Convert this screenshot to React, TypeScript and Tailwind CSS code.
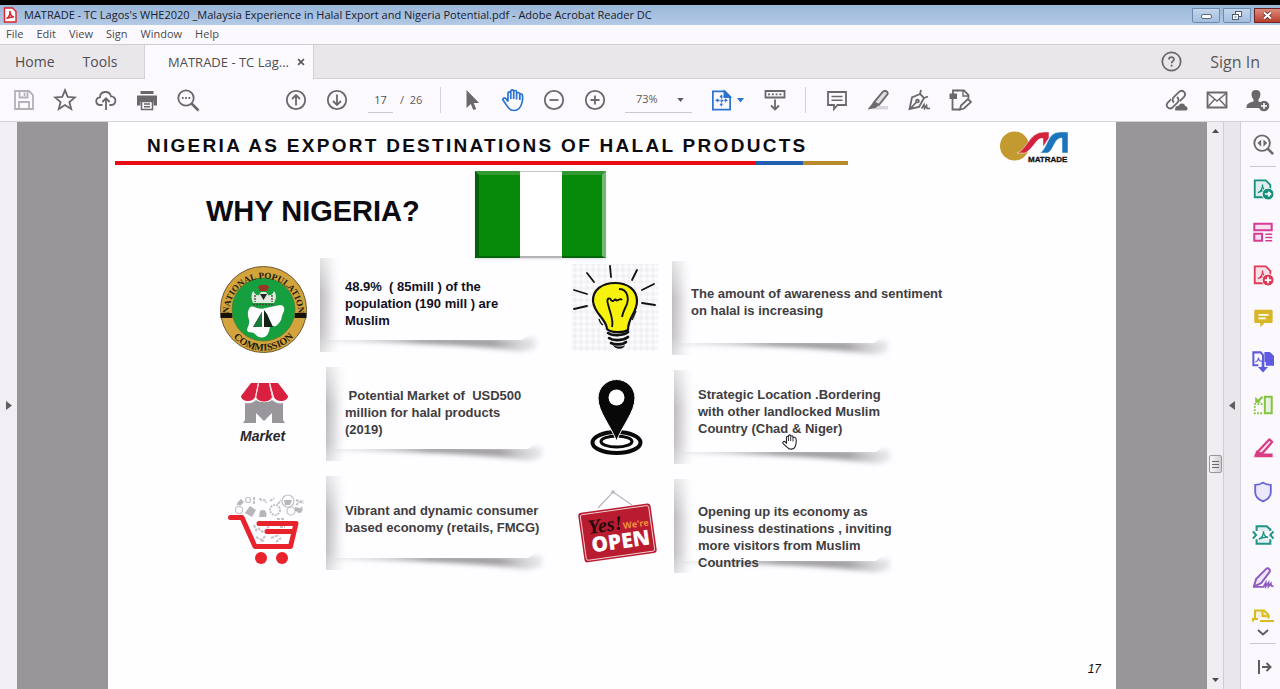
import type { ReactNode } from "react";

/* ---------- shared pieces ---------- */

function Svg({ size = 24, children, className = "" }: { size?: number; children: ReactNode; className?: string }) {
  return (
    <svg width={size} height={size} viewBox="0 0 24 24" fill="none" stroke="currentColor" strokeWidth="1.800" className={className} aria-hidden="true">
      {children}
    </svg>
  );
}

function ToolButton({ label, children, tone = "text-[#6a686b]" }: { label: string; children: ReactNode; tone?: string }) {
  return (
    <button type="button" aria-label={label} className={`flex h-10 w-[41px] shrink-0 items-center justify-center ${tone}`}>
      <Svg>{children}</Svg>
    </button>
  );
}

function Divider() {
  return <div className="h-[26px] w-px shrink-0 bg-[#d3d1d5]" />;
}

/* ---------- window chrome ---------- */

function TitleBar() {
  return (
    <div className="flex h-5 items-center bg-linear-to-b from-[#9ab6d8] to-[#b4cae6] pl-[3px]">
      <svg width="14" height="16" viewBox="0 0 14 16" aria-hidden="true">
        <path d="M1.500 1h8L13 4.500V15H1.500Z" fill="#fff" stroke="#d8262c" strokeWidth="1.400" />
        <path d="M3.500 11.500c2-.8 3.500-4 3.500-7.500 0 3.500 1.500 5.500 4 6-2.500-.3-5 .2-7.500 1.500Z" fill="none" stroke="#d8262c" strokeWidth="1.500" />
      </svg>
      <h1 className="ml-[7px] text-[11px] leading-4 text-[#16202e]">
        MATRADE - TC Lagos's WHE2020 _Malaysia Experience in Halal Export and Nigeria Potential.pdf - Adobe Acrobat Reader DC
      </h1>
      <div className="ml-auto flex gap-[3px]">
        <button type="button" aria-label="Minimize" className="flex h-[15px] w-7 items-center justify-center rounded-b-xs border border-[#6f8cb0] bg-linear-to-b from-[#c3d6ec] to-[#a3bedd]">
          <span className="mt-0.5 h-[5px] w-[11px] rounded-xs border border-[#5a6a80] bg-white" />
        </button>
        <button type="button" aria-label="Restore" className="flex h-[15px] w-7 items-center justify-center rounded-b-xs border border-[#6f8cb0] bg-linear-to-b from-[#c3d6ec] to-[#a3bedd]">
          <svg width="12" height="11" viewBox="0 0 12 11" fill="#fff" stroke="#4f5f75" aria-hidden="true">
            <rect x="4.500" y="1.500" width="6" height="5" />
            <rect x="1.500" y="4.500" width="6" height="5" />
            <path d="M3.500 7h2" />
          </svg>
        </button>
        <button type="button" aria-label="Close" className="flex h-[15px] w-[26px] items-center justify-center border border-r-0 border-[#6d2523] bg-linear-to-b from-[#dc8b7c] to-[#b93d2c]">
          <svg width="11" height="9" viewBox="0 0 11 9" aria-hidden="true">
            <path d="M2 1.500 9 7.500M9 1.500 2 7.500" stroke="#5b2320" strokeWidth="3.600" />
            <path d="M2 1.500 9 7.500M9 1.500 2 7.500" stroke="#fff" strokeWidth="2.200" />
          </svg>
        </button>
      </div>
    </div>
  );
}

function MenuBar() {
  return (
    <nav aria-label="Menu" className="flex h-[19px] items-center gap-[13px] bg-[#fbf9fd] pl-1.5 text-[11px] text-[#4c4a4e]">
      {["File", "Edit", "View", "Sign", "Window", "Help"].map((m) => (
        <button key={m} type="button">{m}</button>
      ))}
    </nav>
  );
}

function TabBar() {
  return (
    <div className="flex h-[35px] items-stretch border-t border-[#cfcdd0] bg-[#e9e7ea] text-sm text-[#4f4d50]">
      <div className="flex w-36 items-center gap-7 border-b border-[#d3d1d4] pl-[15px]">
        <button type="button">Home</button>
        <button type="button">Tools</button>
      </div>
      <div className="flex w-[170px] items-center justify-end gap-2 border-x border-[#d3d1d4] bg-[#fcfafe] pr-2 text-[13px]">
        <button type="button">MATRADE - TC Lag...</button>
        <button type="button" aria-label="Close tab">
          <svg width="8" height="8" viewBox="0 0 9 9" stroke="#5b595c" strokeWidth="1.900" aria-hidden="true">
            <path d="M1.200 1.200 7.800 7.800M7.800 1.200 1.200 7.800" />
          </svg>
        </button>
      </div>
      <div className="flex flex-1 items-center justify-end gap-7 border-b border-[#d3d1d4] pr-5">
        <button type="button" aria-label="Help" className="text-[#666467]">
          <svg width="21" height="21" viewBox="0 0 21 21" fill="none" stroke="currentColor" strokeWidth="1.700" aria-hidden="true">
            <circle cx="10.500" cy="10.500" r="9.200" />
            <path d="M8 8.400c0-3 5-3 5-.2 0 1.900-2.400 1.900-2.400 4" />
            <path d="M10.600 13.700v1.900" />
          </svg>
        </button>
        <button type="button" className="text-base font-medium text-[#59575a]">Sign In</button>
      </div>
    </div>
  );
}

function Toolbar() {
  return (
    <div role="toolbar" aria-label="Document tools" className="flex h-[43px] items-center border-b border-[#d5d3d7] bg-[#fcfafe] pl-[3px] pr-0.5">
      <ToolButton label="Save" tone="text-[#b4b2b6]">
        <path d="M3 3h14l4 4v14H3Z" /><path d="M7.500 3v6.500h8V3M12.500 4.500v3.500M7 21v-7h10v7" />
      </ToolButton>
      <ToolButton label="Favourite">
        <path d="m12 2.200 2.700 6.700 7.200.5-5.500 4.600 1.800 7L12 17.100l-6.200 3.900 1.800-7L2.100 9.400l7.200-.5Z" />
      </ToolButton>
      <ToolButton label="Upload">
        <path d="M8.500 17H6.600C1 17 .8 9.800 6 9.300 6 2.700 15.600 2.100 17 8.400c5.700-.3 5.900 8.600.4 8.600h-2" />
        <path d="M12 22V10.500M8.300 14 12 10.300 15.700 14" />
      </ToolButton>
      <ToolButton label="Print">
        <path d="M5.500 3h13v3h-13Z" fill="currentColor" stroke="none" />
        <path d="M2 7.500h20v10h-3.500v-4h-13v4H2Z" fill="currentColor" stroke="none" />
        <path d="M6.500 13.500h11v8h-11ZM9 16h6M9 18.800h6" strokeWidth="1.500" />
      </ToolButton>
      <ToolButton label="Find">
        <circle cx="10" cy="10" r="7.700" /><path d="m15.500 15.500 7 7" strokeWidth="2.600" />
        <path d="M5.900 10h1.700M9.200 10h1.700M12.500 10h1.700" strokeWidth="1.800" />
      </ToolButton>

      <div className="ml-[67px] flex items-center">
        <ToolButton label="Previous page">
          <circle cx="12" cy="12" r="9.200" /><path d="M12 17.500V7M8 11l4-4 4 4" />
        </ToolButton>
        <ToolButton label="Next page">
          <circle cx="12" cy="12" r="9.200" /><path d="M12 6.500V17M8 13l4 4 4-4" />
        </ToolButton>
        <input aria-label="Page number" defaultValue="17" className="ml-[11px] h-[25px] w-[25px] border-b border-[#cbc9cd] bg-transparent text-center text-[11px] text-[#4f4d50]" />
        <span className="ml-[7px] w-10 whitespace-pre text-[11px] text-[#5c5a5d]">/  26</span>
      </div>
      <Divider />

      <div className="ml-2.5 flex items-center">
        <ToolButton label="Select">
          <path d="M6.500 2v18l4.300-3.900 2.500 6 2.900-1.200-2.500-5.900h5.500Z" fill="currentColor" stroke="none" />
        </ToolButton>
        <ToolButton label="Pan" tone="text-[#2a74cf]">
          <path d="M7 13.500V5.300c0-2 2.800-2 2.800 0V11M9.800 10V3.400c0-2 2.900-2 2.900 0V11M12.700 10V4c0-2 2.900-2 2.900 0v7.500M15.600 8c0-5 0-3 .2-2.200.3-1.900 3-1.700 3 .3 0 0 1.800-1.200 2.500.8.500 2.100.4 5-.3 7.700-1.200 5-4 7.900-8 7.900-4.200 0-6-2.500-7.400-5.300L2.200 12.300c-1-2 1.200-3.200 2.600-1.700L7 13.500" strokeWidth="1.700" strokeLinejoin="round" />
          <path d="M18.800 6v6" />
        </ToolButton>
        <ToolButton label="Zoom out">
          <circle cx="12" cy="12" r="9.200" /><path d="M7.500 12h9" />
        </ToolButton>
        <ToolButton label="Zoom in">
          <circle cx="12" cy="12" r="9.200" /><path d="M7.500 12h9M12 7.500v9" />
        </ToolButton>
        <label className="ml-2.5 flex h-[25px] w-[67px] items-center border-b border-[#cbc9cd] pl-[11px] text-[#5c5a5d]">
          <select aria-label="Zoom level" defaultValue="73%" className="w-[41px] appearance-none bg-transparent text-[11px]">
            <option>73%</option>
            <option>100%</option>
          </select>
          <svg width="7" height="4" viewBox="0 0 8 5" fill="currentColor" aria-hidden="true"><path d="M0 0h8L4 5Z" /></svg>
        </label>
      </div>

      <button type="button" aria-label="Fit page" className="ml-[18px] flex w-[34px] items-center gap-1 text-[#2a74cf]">
        <Svg size={23}>
          <path d="M3 2.500h12.500L21 8v13.500H3Z" /><path d="M15 2.500V8.500h6Z" fill="currentColor" />
          <path d="M12 7v10M7 12h10M10.500 8.500 12 6.800l1.500 1.700M10.500 15.500l1.500 1.700 1.500-1.700M8.200 10.500 6.500 12l1.700 1.500M15.800 10.500l1.700 1.500-1.700 1.500" strokeWidth="1.400" strokeDasharray="3 1" />
        </Svg>
        <svg width="7" height="5" viewBox="0 0 7 5" fill="currentColor" className="shrink-0" aria-hidden="true"><path d="M0 0h7L3.500 4.500Z" /></svg>
      </button>
      <div className="ml-2.5 mr-2.5 flex">
        <ToolButton label="Scrolling mode">
          <path d="M2.500 3h19v6.500h-19Z" /><path d="M5 6.300h14" strokeDasharray="2 1.800" />
          <path d="M12 11.500v10M8 17.500l4 4 4-4" />
        </ToolButton>
      </div>
      <Divider />
      <div className="ml-2.5 flex">
        <ToolButton label="Comment">
          <path d="M3 4h18v13h-8.500L9 21v-4H3Z" /><path d="M6.500 8.500h11M6.500 12.200h11" strokeWidth="1.400" />
        </ToolButton>
        <ToolButton label="Highlight">
          <path d="M11 18h11v3.500H6Z" fill="#d9d7db" stroke="none" />
          <path d="M19.500 2.800c2 .6 2.700 2 2 3.500L13 16.800l-5-2.500L17 3.500Z" fill="#dddbe0" /><path d="m7.500 14 5 3.500-3 2.500-8 1.500Z" fill="currentColor" stroke="none" />
        </ToolButton>
        <ToolButton label="Fill and sign">
          <path d="m14 2-1 4 4 4 4-1.500M13 6 5 9.500 2.500 21 12 19l5-9M3 21l6.500-7" /><circle cx="10.500" cy="13" r="1.400" />
          <path d="m14.500 20.500 2.500-4 .5 4 2-3 .5 3h3" strokeWidth="1.600" />
        </ToolButton>
        <ToolButton label="Edit pages">
          <path d="M4.500 11v10.500h8M9 2.500h7l4.500 4.500v3.500" />
          <path d="M5 6V2.500h5" />
          <path d="M1.500 5.500h7.500v5.500H1.500Z" fill="currentColor" stroke="none" />
          <path d="m12 21.500 1-4 7-6.500 3 3-7 6.500Z" /><path d="M15 3v5h5" strokeWidth="1.400" />
        </ToolButton>
      </div>
      <div className="ml-auto flex">
        <ToolButton label="Share link">
          <path d="M10 14.500c-2-1.500-1.600-4 0-5.600l4.600-4.600c4-3.700 8.600 1 5.200 4.800l-4 4" />
          <path d="M13 9c2 1.500 2 4 .4 5.600l-4.500 4.600c-4 3.400-8.300-1.200-4.900-4.900l3-3" />
          <path d="M12 21.500c-.3-2.500 2-3.200 3-2.400 1-3.500 5-3.500 5.200-.5 2.500 0 3.300 2.900 1.500 2.900Z" fill="currentColor" />
        </ToolButton>
        <ToolButton label="Send mail">
          <path d="M2.500 4.500h19v15h-19Z" /><path d="m2.500 5 9.500 8 9.500-8M2.500 19l7-7.500M21.500 19l-7-7.500" strokeWidth="1.400" />
        </ToolButton>
        <ToolButton label="Add person">
          <path d="M10 2c6 0 5 6.500 2.500 9.500v2l3.500 1.300a6 6 0 0 0-3 5.200H.5c0-4 1.500-5 7-6.500v-2C5 8.500 4 2 10 2Z" fill="currentColor" stroke="none" />
          <circle cx="18" cy="18" r="5.300" fill="currentColor" stroke="none" /><path d="M15 18h6M18 15v6" stroke="#fff" strokeWidth="1.500" />
        </ToolButton>
      </div>
    </div>
  );
}

/* ---------- slide drawings ---------- */

function Logo() {
  return (
    <svg width="72" height="36" viewBox="0 0 72 36" className="ml-auto mr-[46px] mt-2 shrink-0" aria-label="MATRADE" role="img">
      <circle cx="16.500" cy="16" r="14.500" fill="#c39a30" />
      <path d="M19 23C29 20 31 2 46 2h5v6l-6 9V8.500h-2C38 9 36 18 27 23Z" fill="#d4213d" stroke="#fff" strokeWidth=".5" />
      <path d="M42 23C50 18 49 2 62 2h8v21h-6V8C56 8 57 18 50 23Z" fill="#1b75bb" stroke="#fff" strokeWidth=".5" />
      <text x="30" y="32" fontSize="8" fontWeight="700" fontFamily="'Liberation Sans', Arial, sans-serif" fill="#111" stroke="#111" strokeWidth=".3">MATRADE</text>
    </svg>
  );
}

function Flag() {
  return (
    <div role="img" aria-label="Flag of Nigeria" className="flex h-[87px] w-[131px] shadow-sm">
      <div className="flex-1 border-l-4 border-t-4 border-b-2 border-b-[#04650a] border-l-[#046009] border-t-[#329932] bg-[#078a0a]" />
      <div className="w-[42px] border-b-2 border-t border-b-[#b5b5b5] border-t-[#c9c9c9] bg-white" />
      <div className="flex-1 border-b-2 border-r-4 border-t-4 border-b-[#04650a] border-r-[#72b873] border-t-[#329932] bg-[#078a0a]" />
    </div>
  );
}

function Art({ label, children }: { label: string; children: ReactNode }) {
  return (
    <svg width="112" height="100" viewBox="0 0 112 100" fill="none" className="shrink-0" role="img" aria-label={label}>
      {children}
    </svg>
  );
}

function Seal() {
  return (
    <Art label="National Population Commission seal">
      <circle cx="55.500" cy="51.500" r="43" fill="#d3a43d" stroke="#6d5a2c" />
      <path d="M12.500 55h12v5h-12ZM86.500 55h12v5h-12Z" fill="#16120a" />
      <circle cx="55.500" cy="51.500" r="31.500" fill="#159f3f" stroke="#4c7a2c" strokeWidth=".8" />
      <path id="seal-top" d="M21 55a34.500 34.500 0 1 1 69 0" />
      <path id="seal-bottom" d="M15 52a40.500 40.500 0 0 0 81 0" />
      <g fontFamily="'Liberation Serif', serif" fontWeight="700" fill="#231a0c" textAnchor="middle">
        <text fontSize="9"><textPath href="#seal-top" startOffset="50%">NATIONAL POPULATION</textPath></text>
        <text fontSize="10"><textPath href="#seal-bottom" startOffset="50%">COMMISSION</textPath></text>
      </g>
      <path d="M50 29c2-3 10-3 11 0l-2 4h-7Z" fill="#9c3327" />
      <path d="M45 33c2 3 4 5 6 4l2-3h5l2 3c3 1 5-1 6-4 3 4 2 8 0 12H45c-2-4-2-8 0-12Z" fill="#e1e9de" />
      <path d="m52 36 3.500 6 3.500-6Z" fill="#222" />
      <path d="M47 37v7M64 37v7M45 46.500h21" stroke="#4a4a3c" strokeWidth="1.400" strokeDasharray="2 1" />
      <path d="M41 51c2-4 5-2 8-1 6 2 12-1 18-2 3 0 5-2 8 0 3 3 0 7-1 10-1 6-3 7-6 10-3 1-4-1-6 1-1 3-1 7-4 9-4 3-9 1-11-2-2-3-7 0-8-4 0-3 3-5 2-10-1-4-2-7 0-11Z" fill="#fdfefd" />
      <path d="M45 69 54 54v15ZM56 69V52l3 4 6 13Z" fill="#132417" />
      <path d="M45 69 54 54v15Z" fill="#1a7a3a" />
    </Art>
  );
}

function Bulb() {
  return (
    <Art label="Light bulb">
      <defs>
        <pattern id="checks" width="6" height="6" patternUnits="userSpaceOnUse">
          <path d="M3 0 6 3 3 6 0 3Z" fill="#f1eff2" />
        </pattern>
      </defs>
      <path d="M11 3h87v87H11Z" fill="#fbfafc" />
      <path d="M11 3h87v87H11Z" fill="url(#checks)" />
      <path d="m14 29 13 4M14 48l13-3M27 12l7 9M50 5l1 11M77 9l-5 10M94 23l-12 6M82 42l13 2" stroke="#111" strokeWidth="1.800" strokeLinecap="round" />
      <path d="M47 68c-1-11-13-15-14-28-.5-11 9-18 22-18s22 7 22 18c0 12-9 16-9 29-5 3-17 3-21-1Z" fill="#f6f20d" stroke="#111" strokeWidth="2.200" />
      <path d="M52 66c2-7-2-14-4-23-2-6 2-7 3-4 2 3 4-2 5 0 2 2 4-3 6 0M59 28c8 0 10 8 8 15-2 5-4 7-5 13" stroke="#111" strokeWidth="1.900" />
      <path d="M39 58c1 3 2 5 4 6M76 50c-2 4-2 6-4 9" stroke="#111" strokeWidth="1.300" />
      <path d="M48 72c4 3 15 3 20-1M49 77c4 3 14 3 19-1M51 82c4 2 12 2 15-1" stroke="#111" strokeWidth="2.600" strokeLinecap="round" />
      <path d="M53 84c4 2 9 2 12 0-1 5-10 5-12 0Z" fill="#111" />
    </Art>
  );
}

function Market() {
  return (
    <Art label="Market">
      <path d="M37 36c6 1 9-1 11-3 4 3 13 3 16 0 4 3 7 4 11 3v17l2 3H64V46l-8 8-8-8v10H35l2-3Z" fill="#99979b" />
      <path d="M43 16h7l-3 14c-2 6-14 5-14-1Z" fill="#d9213f" />
      <path d="M51 16h10l3 14c-2 6-14 6-16 0Z" fill="#d9213f" />
      <path d="M62 16h8l10 13c0 6-12 7-14 1Z" fill="#d9213f" />
      <path d="M50.500 16 47.500 31M61.500 16l3.500 15" stroke="#f5d6dc" strokeWidth="1.200" />
      <text x="32" y="74" fontSize="14" fontWeight="700" fontStyle="italic" fontFamily="'Liberation Sans', sans-serif" fill="#29272a">Market</text>
    </Art>
  );
}

function Pin() {
  return (
    <Art label="Location pin">
      <ellipse cx="56.500" cy="72.500" rx="24" ry="10.500" stroke="#080808" strokeWidth="4" />
      <ellipse cx="56.500" cy="71.500" rx="15.500" ry="5.500" stroke="#080808" strokeWidth="3" />
      <path d="M56.500 71C51 56 38 42 38 28a18.500 18.500 0 0 1 37 0c0 14-13 28-18.500 43Z" fill="#080808" stroke="#fff" strokeWidth="1" />
      <circle cx="56.500" cy="27.500" r="8" fill="#fff" />
    </Art>
  );
}

function Cart() {
  return (
    <Art label="Shopping cart">
      <g stroke="#c4c2c5" strokeWidth="1.200">
        <circle cx="67" cy="34" r="5" strokeWidth="2" strokeDasharray="2 1" />
        <circle cx="80" cy="25" r="6" /><circle cx="40" cy="24" r="2.500" /><circle cx="83" cy="35" r="4" /><circle cx="31" cy="34" r="3.500" />
        <path d="m29 29 6-5M46 21v7M52 22c0 4 6 0 6 5M62 25l4-3M70 28l3-4M88 24l8 3M88 29l7-5M94 31l-4 6M69 43h8M50 52l6 5M46 49l3 7M57 60l-4 6M63 62l8-3M68 66l5-4M48 61l8 4M61 50l-3 4M72 51h5" strokeWidth="2" strokeDasharray="3 1" />
      </g>
      <path d="m42 30 6 4-4 7-7-4ZM52 35c5-3 8 2 6 6h-7ZM76 24h8l-2 5h-5ZM87 31l8 2-2 4-6-2ZM29 27l4-4 3 3-4 4Z" fill="#b8b6b9" />
      <path d="M22.500 41.500H34l13 29h35.500l5.500-23H51M59 55.500h26" stroke="#e8232c" strokeWidth="5" strokeLinecap="round" strokeLinejoin="round" />
      <circle cx="53" cy="82" r="6" fill="#e8232c" /><circle cx="74" cy="82" r="6" fill="#e8232c" />
    </Art>
  );
}

function OpenSign() {
  return (
    <Art label="Yes! We're open sign">
      <path d="M38 29 53 13l19 13" stroke="#b9b7ba" strokeWidth="1.200" /><circle cx="53" cy="13" r="1.800" fill="#b9b7ba" />
      <g transform="rotate(-8 57 54)">
        <rect x="21" y="29" width="73" height="50" rx="3" fill="#b91c30" />
        <rect x="23" y="31" width="69" height="46" rx="2" stroke="#f1d9dc" strokeWidth=".9" />
        <text x="29" y="51" fontSize="20" fontWeight="700" fontStyle="italic" fontFamily="'Liberation Serif', serif" fill="#24090d">Yes!</text>
        <text x="64" y="51" fontSize="9" fontWeight="700" fontFamily="'Open Sans', sans-serif" fill="#f0913c">We're</text>
        <text x="30" y="70" fontSize="21" fontWeight="800" fontFamily="'Open Sans', sans-serif" fill="#fff">OPEN</text>
      </g>
    </Art>
  );
}

function CardShade() {
  return (
    <svg width="226" height="102" viewBox="0 0 226 102" className="absolute left-0 top-0" aria-hidden="true">
      <defs>
        <linearGradient id="fold" x1="0" x2="1" y1="0" y2="0">
          <stop offset="0" stopColor="#bdbbbe" /><stop offset=".4" stopColor="#dedcdf" /><stop offset="1" stopColor="#fdfcfe" stopOpacity="0" />
        </linearGradient>
        <linearGradient id="fold-fade" x1="0" x2="0" y1="0" y2="1">
          <stop offset="0" stopColor="#fff" stopOpacity=".6" /><stop offset=".4" stopColor="#fff" stopOpacity="0" /><stop offset=".8" stopColor="#fff" stopOpacity=".1" /><stop offset="1" stopColor="#fff" stopOpacity=".5" />
        </linearGradient>
        <linearGradient id="edge" x1="0" x2="1" y1="0" y2="0">
          <stop offset="0" stopColor="#c9c7ca" stopOpacity=".5" /><stop offset=".45" stopColor="#8e8c90" /><stop offset=".8" stopColor="#a5a3a7" /><stop offset="1" stopColor="#cdcbce" stopOpacity=".4" />
        </linearGradient>
        <filter id="soft" x="-10%" y="-60%" width="120%" height="220%"><feGaussianBlur stdDeviation="2.500" /></filter>
        <clipPath id="below"><path d="M0 82h202l10-8h14v28H0Z" /></clipPath>
      </defs>
      <path d="M0 0h22v94H0Z" fill="url(#fold)" />
      <path d="M0 0h22v94H0Z" fill="url(#fold-fade)" />
      <g clipPath="url(#below)">
        <path d="M8 80H216V90Q205 95 190 92Q120 84 8 83Z" fill="url(#edge)" filter="url(#soft)" />
      </g>
    </svg>
  );
}

function HandCursor() {
  return (
    <svg width="16" height="17" viewBox="0 0 16 17" className="absolute left-[108px] top-16" aria-hidden="true">
      <path d="M4.500 9V3.500c0-1.700 2-1.700 2 0V2c0-1.500 2.200-1.500 2.200 0v.8c0-1.500 2.300-1.400 2.300.2v1c.2-1.300 3-1 3.200 1.500.2 3 0 5-1.200 7.500-1 2.500-6 3-7.500.5L1.200 9.700C0 8 2 6.500 3.300 8Z" fill="#fff" stroke="#222" strokeWidth="1.100" />
      <path d="M6.500 3.500v3.500M8.700 3v4M11 4v3.500" stroke="#222" strokeWidth=".9" />
    </svg>
  );
}

type Reason = { art: ReactNode; lines: string[]; inset: string; text: string; cursor?: boolean };

const leftReasons: Reason[] = [
  { art: <Seal />, lines: ["48.9%  ( 85mill ) of the", "population (190 mill ) are", "Muslim"], inset: "ml-0", text: "pl-[25px] pt-5 text-[#12101f]" },
  { art: <Market />, lines: [" Potential Market of  USD500", "million for halal products", "(2019)"], inset: "ml-1.5", text: "pl-[19px] pt-5 text-[#3f3d41]" },
  { art: <Cart />, lines: ["Vibrant and dynamic consumer", "based economy (retails, FMCG)"], inset: "ml-1.5", text: "pl-[19px] pt-[26px] text-[#3f3d41]" },
];

const rightReasons: Reason[] = [
  { art: <Bulb />, lines: ["The amount of awareness and sentiment", "on halal is increasing"], inset: "ml-0", text: "pl-[19px] pt-6 text-[#3f3d41]" },
  { art: <Pin />, lines: ["Strategic Location .Bordering", "with other landlocked Muslim", "Country (Chad & Niger)"], inset: "ml-0.5", text: "pl-6 pt-4 text-[#3f3d41]", cursor: true },
  { art: <OpenSign />, lines: ["Opening up its economy as", "business destinations , inviting", "more visitors from Muslim", "Countries"], inset: "ml-0.5", text: "pl-6 pt-6 text-[#3f3d41]" },
];

function ReasonList({ items }: { items: Reason[] }) {
  return (
    <ul>
      {items.map((r) => (
        <li key={r.lines[0]} className="flex h-[109px]">
          {r.art}
          <div className={`relative ${r.inset}`}>
            <CardShade />
            <p className={`relative whitespace-pre text-[13px] leading-[17px] font-bold ${r.text}`}>{r.lines.join("\n")}</p>
            {r.cursor && <HandCursor />}
          </div>
        </li>
      ))}
    </ul>
  );
}

function Slide() {
  return (
    <article className="flex h-full flex-col bg-[#fefdff] font-['Liberation_Sans',Arial,sans-serif] text-[#0c0b10]">
      <header className="flex h-[43px] items-start">
        <div className="w-[740px] pl-[7px]">
          <h2 className="pb-px pl-8 pt-[9px] text-[19px] leading-[29px] font-bold tracking-[0.12em] whitespace-nowrap">NIGERIA AS EXPORT DESTINATIONS OF HALAL PRODUCTS</h2>
          <div className="flex h-1">
            <span className="flex-1 bg-[#ea0a14]" />
            <span className="w-[47px] bg-[#2160ae]" />
            <span className="w-[45px] bg-[#b98a2c]" />
          </div>
        </div>
        <Logo />
      </header>
      <div className="mt-1.5 flex pl-[98px]">
        <h3 className="mt-[22px] w-[269px] text-[29px] leading-9 font-bold whitespace-nowrap">WHY NIGERIA?</h3>
        <Flag />
      </div>
      <div className="flex pl-[100px]">
        <div className="w-[352px]"><ReasonList items={leftReasons} /></div>
        <div className="pt-[3px]"><ReasonList items={rightReasons} /></div>
      </div>
      <footer className="mt-auto pr-[15px] pb-3 text-right text-xs leading-4 italic">17</footer>
    </article>
  );
}

/* ---------- side panels ---------- */

function PdfPage() {
  return (
    <>
      <path d="M3 2.500h12l5 5V21H3Z" fill="currentColor" fillOpacity=".12" strokeWidth="2" />
      <path d="M6.500 16c4-1.500 5-5 5-9 0 4 2 6.500 5 6.500-4 0-7 .5-10 2.500Z" strokeWidth="1.300" />
    </>
  );
}

const sideTools: { label: string; tone: string; icon: ReactNode }[] = [
  { label: "Export PDF", tone: "text-[#17917f]", icon: <><PdfPage /><circle cx="17.500" cy="17.500" r="6.500" fill="currentColor" stroke="#fff" strokeWidth="1" /><path d="M14 17.500h6M17.700 15l2.500 2.500-2.500 2.500" stroke="#fff" strokeWidth="1.800" /></> },
  { label: "Organize pages", tone: "text-[#d63c96]", icon: <><path d="M2.500 3h19v7h-19ZM2.500 14h8.500v7.500H2.500Z" fill="currentColor" fillOpacity=".12" strokeWidth="2.200" /><path d="M14.500 14.500H22M14.500 18H22M14.500 21.500H22" strokeWidth="1.500" /></> },
  { label: "Create PDF", tone: "text-[#de3a55]", icon: <><PdfPage /><circle cx="17.500" cy="17.500" r="6.500" fill="currentColor" stroke="#fff" strokeWidth="1" /><path d="M14 17.500h7M17.500 14v7" stroke="#fff" strokeWidth="2" /></> },
  { label: "Comment", tone: "text-[#d9b528]", icon: <><path d="M4 3h17c1 0 1.500.5 1.500 1.500V16c0 1-.5 1.500-1.500 1.500h-7.500L9 22v-4.500H4c-1 0-1.500-.5-1.500-1.500V4.500C2.500 3.500 3 3 4 3Z" fill="currentColor" stroke="none" /><path d="M7 8.500h11M7 12.500h8" stroke="#fff" strokeWidth="1.900" /></> },
  { label: "Combine files", tone: "text-[#5f5be0]", icon: <><path d="M7 15.500H1.500V1.500h8L12 4.500v11" strokeWidth="2.200" /><path d="M3.500 12c3-1 3.500-3 3.500-5 0 2 1.500 4 4 4" strokeWidth="1.200" /><path d="M13.500 1h6L24 5.500v10.500h-10.500Z" fill="currentColor" stroke="none" /><path d="M12 12v6" stroke="#fff" strokeWidth="6" /><path d="M6.500 17.500h11L12 23.500Z" fill="currentColor" stroke="none" /><path d="M12 12v7" strokeWidth="3" /></> },
  { label: "Compress", tone: "text-[#84c440]", icon: <><path d="M14 3h7.500v18H14Z" fill="currentColor" fillOpacity=".15" strokeWidth="2.200" /><path d="M11.500 11H3v10h9" strokeDasharray="2 1.500" strokeWidth="2" /><path d="M11.500 3 6 8.500" strokeWidth="2.200" /><path d="M3.500 3v6.500H10Z" fill="currentColor" stroke="none" /></> },
  { label: "Edit", tone: "text-[#d93c84]", icon: <><path d="m19 2.500 3 3L11 18l-5.500-1Z" fill="currentColor" fillOpacity=".12" strokeWidth="2.400" strokeLinejoin="round" /><path d="m5 14.500 5 4.500-8 2.500ZM12 18h10.500v4H1.500Z" fill="currentColor" stroke="none" /></> },
  { label: "Protect", tone: "text-[#6663d8]", icon: <path d="M12 1.800c2.500 2 5 2.500 8.500 2.500v8c0 5-3.500 8-8.500 10-5-2-8.500-5-8.500-10v-8c3.500 0 6-.5 8.500-2.500Z" fill="currentColor" fillOpacity=".1" strokeWidth="2" /> },
  { label: "Compress PDF", tone: "text-[#1f9488]", icon: <><path d="M5 7.500V2.500h11L20 6v1.500M5 16.500v5h15v-5" fill="currentColor" fillOpacity=".1" strokeWidth="2.200" /><path d="M1 8 4.500 12 1 16M23.500 8 20 12l3.500 4" strokeWidth="2.200" /><path d="M7.500 16.500c4-1.500 5-5 5-8.500 0 4 1.500 6 5 6.500-4-.4-7 .3-10 2Z" strokeWidth="1.500" /></> },
  { label: "Fill & Sign", tone: "text-[#8f5cc4]", icon: <><path d="M16 1.500c2.500-.5 4.500 2 3 4L10 17.500 2 21.500 4.500 13Z" fill="currentColor" fillOpacity=".1" strokeWidth="2.200" strokeLinejoin="round" /><path d="M1.500 21.700H12.500l2.500-4.500v4l3-4v4l2.500-3c0 2 .5 3 3 3" strokeWidth="2" /></> },
];

function Sidebar() {
  return (
    <aside aria-label="Tools pane" className="flex w-10 shrink-0 flex-col items-center border-l border-[#d3d1d4] bg-[#fbf9fd] pl-1">
      <button type="button" aria-label="Search tools" className="flex h-11 shrink-0 items-center text-[#6a686b]">
        <Svg size={22}><circle cx="11" cy="11" r="8.500" strokeWidth="2" /><path d="m17 17 6 6" strokeWidth="2.800" /><path d="M10 7v8l-4-4ZM12.500 7v8l4-4Z" fill="currentColor" stroke="none" /></Svg>
      </button>
      <div className="h-px w-[26px] shrink-0 bg-[#cbc9cd]" />
      <div className="flex flex-1 flex-col justify-between">
        {sideTools.map((t) => (
          <button key={t.label} type="button" aria-label={t.label} className={`flex h-[43px] items-center ${t.tone}`}>
            <Svg size={22}>{t.icon}</Svg>
          </button>
        ))}
      </div>
      <button type="button" aria-label="Stamp" className="flex h-[22px] shrink-0 items-end text-[#d8bb1e]">
        <svg width="22" height="13" viewBox="0 0 22 13" fill="none" stroke="currentColor" strokeWidth="2" aria-hidden="true">
          <path d="M3 9V1.500h9l4.500 4.500v3.500" fill="currentColor" fillOpacity=".15" /><path d="M10.500 2v5h5M1 12.500V10h5M8 12h14" />
        </svg>
      </button>
      <button type="button" aria-label="More tools" className="flex h-[21px] shrink-0 items-center text-[#5f5d60]">
        <svg width="12" height="7" viewBox="0 0 12 7" fill="none" stroke="currentColor" strokeWidth="2" aria-hidden="true"><path d="m1 1 5 4.500L11 1" /></svg>
      </button>
      <div className="h-px w-[26px] shrink-0 bg-[#cbc9cd]" />
      <button type="button" aria-label="Collapse pane" className="flex h-[45px] shrink-0 items-center pl-1 text-[#5f5d60]">
        <svg width="15" height="16" viewBox="0 0 15 16" fill="none" stroke="currentColor" strokeWidth="2" aria-hidden="true"><path d="M2 1v14M5 8h8M9.500 4l4 4-4 4" /></svg>
      </button>
    </aside>
  );
}

function Scrollbar() {
  return (
    <div className="flex w-4 shrink-0 flex-col items-center bg-[#f0eef2]">
      <button type="button" aria-label="Scroll up" className="flex h-[18px] w-full items-center justify-center">
        <svg width="7" height="4" viewBox="0 0 7 4" fill="#4d4b4e" aria-hidden="true"><path d="M0 4h7L3.500 0Z" /></svg>
      </button>
      <div className="grow-[316] basis-0" />
      <div className="flex h-[18px] w-[13px] flex-col items-center justify-center gap-0.5 rounded-xs border border-[#98969a] bg-linear-to-r from-[#f6f5f7] to-[#d2d0d4]">
        <span className="h-px w-[7px] bg-[#6a686c]" />
        <span className="h-px w-[7px] bg-[#6a686c]" />
        <span className="h-px w-[7px] bg-[#6a686c]" />
      </div>
      <div className="grow-[198] basis-0" />
      <button type="button" aria-label="Scroll down" className="flex h-[18px] w-full items-center justify-center">
        <svg width="7" height="4" viewBox="0 0 7 4" fill="#4d4b4e" aria-hidden="true"><path d="M0 0h7L3.500 4Z" /></svg>
      </button>
    </div>
  );
}

export default function App() {
  return (
    <div className="flex min-h-screen flex-col border-t-[5px] border-black bg-[#fbf9fd] font-['Open_Sans','Noto_Sans',sans-serif]">
      <TitleBar />
      <MenuBar />
      <TabBar />
      <Toolbar />
      <div className="flex flex-1">
        <button type="button" aria-label="Open navigation pane" className="flex w-[17px] shrink-0 items-center justify-center bg-[#f1eff3]">
          <svg width="6" height="9" viewBox="0 0 6 9" fill="#5f5d60" aria-hidden="true"><path d="M0 0v9l6-4.500Z" /></svg>
        </button>
        <main className="flex-1 bg-[#989698] px-[91px]">
          <Slide />
        </main>
        <Scrollbar />
        <button type="button" aria-label="Close tools pane" className="flex w-[17px] shrink-0 items-center justify-center border-l border-[#d0ced2] bg-[#e9e7eb]">
          <svg width="6" height="9" viewBox="0 0 6 9" fill="#5f5d60" aria-hidden="true"><path d="M6 0v9L0 4.500Z" /></svg>
        </button>
        <Sidebar />
      </div>
    </div>
  );
}
